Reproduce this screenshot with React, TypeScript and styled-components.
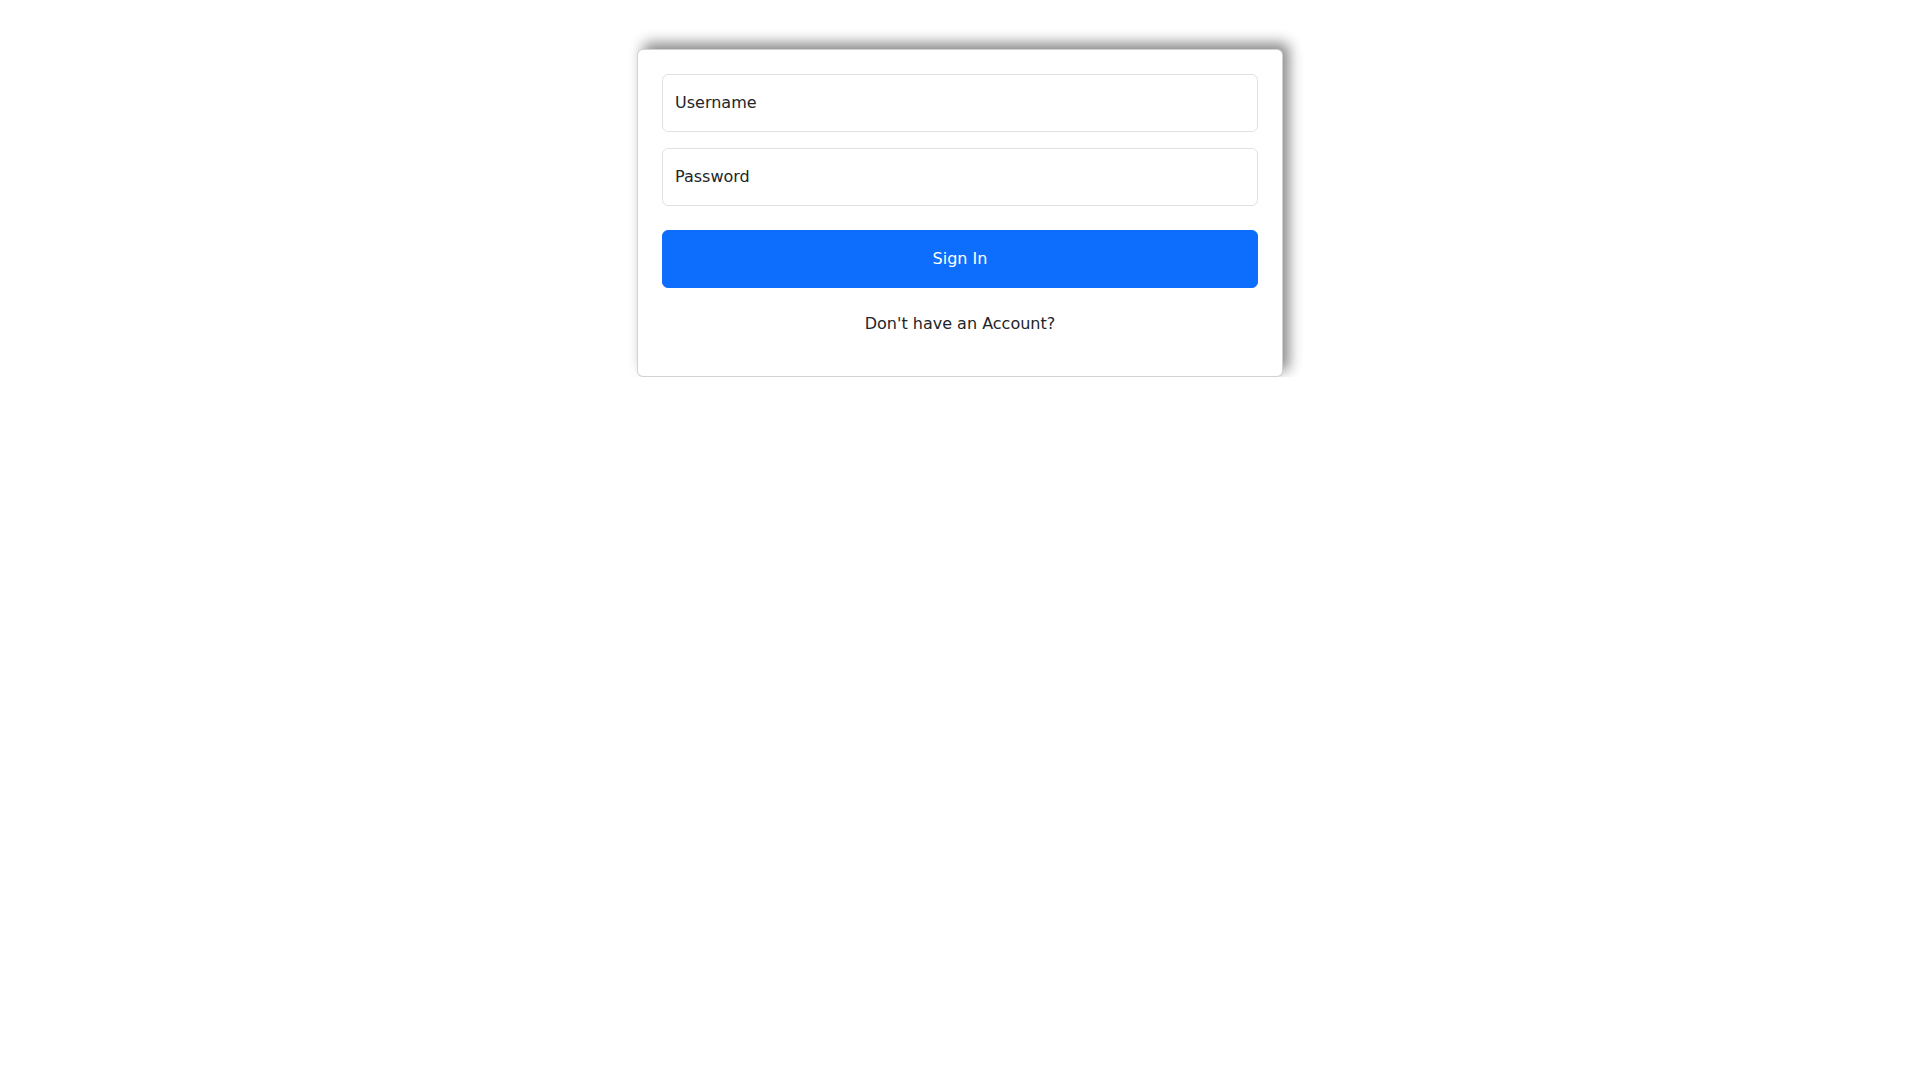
import React from "react";
import styled, { createGlobalStyle } from "styled-components";

const Global = createGlobalStyle`
  html, body { margin: 0; padding: 0; background: #fff; }
  body {
    font-family: "DejaVu Sans", "Liberation Sans", sans-serif;
    font-size: 16px;
    line-height: 1.5;
    color: #212529;
  }
  * { box-sizing: border-box; }
`;

const Page = styled.main`
  display: flex;
  justify-content: center;
  padding-top: 49px;
`;

const Card = styled.form`
  width: 646px;
  display: flex;
  flex-direction: column;
  padding: 24px;
  background: #fff;
  border: 1px solid rgba(0, 0, 0, 0.175);
  border-radius: 6px;
  box-shadow: 6px -6px 14px #888;
`;

const Field = styled.input<{ $gap: number }>`
  display: block;
  width: 100%;
  height: 58px;
  margin: 0 0 ${(p) => p.$gap}px;
  padding: 0 12px 2px;
  font: inherit;
  color: #212529;
  background: #fff;
  border: 1px solid #dee2e6;
  border-radius: 6px;
  outline: none;
  &::placeholder {
    color: #212529;
    opacity: 1;
  }
`;

const SubmitButton = styled.button`
  height: 58px;
  width: 100%;
  margin-bottom: 24px;
  border: 1px solid #0d6efd;
  border-radius: 6px;
  background: #0d6efd;
  color: #fff;
  font: inherit;
  cursor: pointer;
`;

const Footnote = styled.p`
  margin: 0 0 16px;
  text-align: center;
  line-height: 24px;
`;

export default function App() {
  return (
    <>
      <Global />
      <Page>
        <Card onSubmit={(e) => e.preventDefault()}>
          <Field $gap={16} type="text" placeholder="Username" />
          <Field $gap={24} type="password" placeholder="Password" />
          <SubmitButton type="submit">Sign In</SubmitButton>
          <Footnote>Don't have an Account?</Footnote>
        </Card>
      </Page>
    </>
  );
}
